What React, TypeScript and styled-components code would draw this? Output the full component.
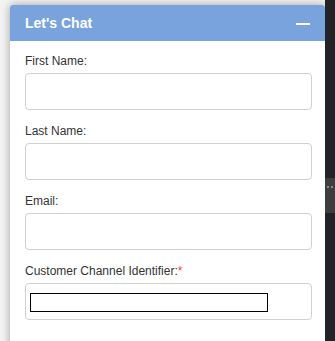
import React from "react";
import styled, { createGlobalStyle } from "styled-components";

const GlobalStyle = createGlobalStyle`
    html, body {
        margin: 0;
        padding: 0;
        background: #f4f4f4;
        overflow: hidden;
    }
`;

const Page = styled.div`
    display: flex;
    height: 341px;
    width: 335px;
    overflow: hidden;
`;

const Stage = styled.div`
    flex: 1;
    padding: 5px 0 0 10px;
    overflow: hidden;
`;

const Panel = styled.div`
    width: 315px;
    height: 400px;
    background: #fff;
    border-radius: 3px 3px 0 0;
    box-shadow: 0 0 10px rgba(0, 0, 0, 0.35);
    font-family: Arial, "Liberation Sans", sans-serif;
`;

const Header = styled.div`
    height: 36px;
    display: flex;
    align-items: center;
    justify-content: space-between;
    padding: 0 15px;
    background: #79a3dc;
    border-radius: 3px 3px 0 0;
`;

const Title = styled.div`
    color: #fff;
    font-size: 14px;
    font-weight: bold;
`;

const Minimize = styled.div`
    width: 14px;
    height: 2px;
    margin-top: 1px;
    background: #fff;
`;

const Body = styled.div`
    padding: 12px 13px 0 15px;
`;

const Field = styled.div`
    margin-bottom: 13px;
`;

const Label = styled.label`
    display: block;
    font-size: 12px;
    line-height: 17px;
    color: #333;
    margin-bottom: 3px;
`;

const Required = styled.span`
    color: #e8473b;
`;

const InputBox = styled.div`
    box-sizing: border-box;
    height: 37px;
    border: 1px solid #d0d0d0;
    border-radius: 4px;
    padding: 9px 0 0 4px;
`;

const InnerInput = styled.div`
    box-sizing: border-box;
    width: 238px;
    height: 19px;
    border: 1px solid #000;
`;

const Strip = styled.div`
    width: 10px;
    background: #222327;
    display: flex;
    flex-direction: column;
    padding-top: 178px;
`;

const Handle = styled.div`
    height: 35px;
    background: #3e3e3e;
    display: flex;
    justify-content: center;
    gap: 2px;
    padding-top: 8px;
    box-sizing: border-box;
`;

const Dot = styled.span`
    width: 2px;
    height: 2px;
    background: #8a8a8a;
`;

const fields = ["First Name:", "Last Name:", "Email:"];

export default function App() {
    return (
        <Page>
            <GlobalStyle />
            <Stage>
                <Panel>
                    <Header>
                        <Title>Let's Chat</Title>
                        <Minimize />
                    </Header>
                    <Body>
                        {fields.map(f => (
                            <Field key={f}>
                                <Label>{f}</Label>
                                <InputBox />
                            </Field>
                        ))}
                        <Field>
                            <Label>Customer Channel Identifier:<Required>*</Required></Label>
                            <InputBox>
                                <InnerInput />
                            </InputBox>
                        </Field>
                    </Body>
                </Panel>
            </Stage>
            <Strip>
                <Handle>
                    <Dot />
                    <Dot />
                </Handle>
            </Strip>
        </Page>
    );
}
